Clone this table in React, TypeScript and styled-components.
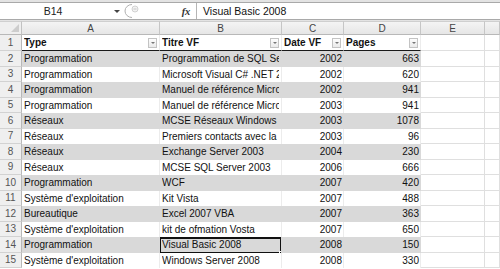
import React from "react";
import styled, { createGlobalStyle } from "styled-components";

const GlobalStyle = createGlobalStyle`
  html, body {
    margin: 0;
    padding: 0;
    background: #ffffff;
    overflow: hidden;
  }
  body {
    font-family: "Liberation Sans", Arial, sans-serif;
    color: #111;
  }
`;

const Window = styled.div`
  width: 500px;
  height: 269px;
  display: flex;
  flex-direction: column;
  overflow: hidden;
  background: #ffffff;
`;

const FormulaBar = styled.div`
  height: 21px;
  flex: none;
  box-sizing: border-box;
  padding: 2px 0 3px;
  background: #e3e3e3;
`;

const BarInner = styled.div`
  height: 16px;
  display: flex;
  align-items: stretch;
  background: #ffffff;
  border-top: 1px solid #a9a9a9;
  border-bottom: 1px solid #a9a9a9;
`;

const NameBox = styled.div`
  width: 124px;
  display: flex;
  align-items: center;
  position: relative;
  font-size: 10.5px;
  color: #222;
`;

const NameText = styled.span`
  flex: 1;
  text-align: center;
  padding-right: 8px;
`;

const Caret = styled.span`
  width: 0;
  height: 0;
  margin-right: 4px;
  border-left: 3px solid transparent;
  border-right: 3px solid transparent;
  border-top: 3px solid #444;
`;

const Splitter = styled.div`
  width: 56px;
  display: flex;
  align-items: center;
`;

const FxBox = styled.div`
  width: 12px;
  display: flex;
  align-items: center;
  justify-content: center;
  font-family: "Liberation Serif", "Times New Roman", serif;
  font-style: italic;
  font-weight: bold;
  font-size: 10.5px;
  color: #333;
`;

const FormulaInput = styled.div`
  flex: 1;
  display: flex;
  align-items: center;
  margin-left: 4px;
  padding-left: 6px;
  border-left: 1px solid #b5b5b5;
  font-size: 10.5px;
  color: #111;
`;

const Sheet = styled.div`
  display: grid;
  grid-template-columns: 22px 138px 122px 62px 77px 64px 1fr;
  grid-template-rows: 14px 16px repeat(14, 15.5px);
  flex: none;
`;

const Corner = styled.div`
  background: #efefef;
  border-right: 1px solid #c2c2c2;
  border-bottom: 1px solid #b8b8b8;
  border-top: 1px solid #cfcfcf;
  box-sizing: border-box;
  position: relative;
  &::after {
    content: "";
    position: absolute;
    right: 2px;
    bottom: 2px;
    border-left: 8px solid transparent;
    border-bottom: 8px solid #cdcdcd;
  }
`;

const ColHead = styled.div`
  background: linear-gradient(#f4f4f4, #e6e6e6);
  border-right: 1px solid #c6c6c6;
  border-bottom: 1px solid #b8b8b8;
  border-top: 1px solid #cfcfcf;
  box-sizing: border-box;
  display: flex;
  align-items: center;
  justify-content: center;
  font-size: 10px;
  color: #444;
`;

const RowHead = styled.div`
  background: #efefef;
  border-right: 1px solid #b8b8b8;
  border-bottom: 1px solid #d2d2d2;
  box-sizing: border-box;
  display: flex;
  align-items: center;
  justify-content: center;
  font-size: 10px;
  color: #555;
`;

const Cell = styled.div<{ $band?: boolean; $right?: boolean; $head?: boolean; $outside?: boolean }>`
  position: relative;
  box-sizing: border-box;
  display: flex;
  align-items: center;
  justify-content: ${(p) => (p.$right ? "flex-end" : "flex-start")};
  padding: 0 ${(p) => (p.$right ? "1px" : "2px")} 0 2px;
  overflow: hidden;
  white-space: nowrap;
  font-size: 10px;
  font-weight: ${(p) => (p.$head ? "bold" : "normal")};
  background: ${(p) => (p.$band ? "#d9d9d9" : "#ffffff")};
  border-bottom: ${(p) =>
    p.$head ? "1px solid #1a1a1a" : p.$outside ? "1px solid #dfdfdf" : "none"};
  border-right: 1px solid ${(p) => (p.$outside ? "#dfdfdf" : p.$band ? "#d9d9d9" : "#ececec")};
`;

const CellText = styled.span`
  flex: 1;
  overflow: hidden;
`;

const FilterButton = styled.span`
  flex: none;
  width: 9px;
  height: 10px;
  margin-left: 2px;
  margin-right: 0;
  box-sizing: border-box;
  border: 1px solid #c3c3c3;
  background: linear-gradient(#fdfdfd, #eaeaea);
  display: flex;
  align-items: center;
  justify-content: center;
  &::after {
    content: "";
    border-left: 2.5px solid transparent;
    border-right: 2.5px solid transparent;
    border-top: 2.5px solid #777;
  }
`;

const Selection = styled.span`
  position: absolute;
  inset: 0 -1px -1px -1px;
  border: 2px solid #111;
  pointer-events: none;
  &::after {
    content: "";
    position: absolute;
    right: -4px;
    bottom: -4px;
    width: 5px;
    height: 5px;
    background: #111;
    border: 1px solid #fff;
    box-sizing: border-box;
  }
`;

type Row = [string, string, number, number];

const rows: Row[] = [
  ["Programmation", "Programmation de SQL Server 2000", 2002, 663],
  ["Programmation", "Microsoft Visual C# .NET 2003", 2002, 620],
  ["Programmation", "Manuel de référence Microsoft Visual Basic", 2002, 941],
  ["Programmation", "Manuel de référence Microsoft Visual C#", 2003, 941],
  ["Réseaux", "MCSE Réseaux Windows Server 2003", 2003, 1078],
  ["Réseaux", "Premiers contacts avec la messagerie", 2003, 96],
  ["Réseaux", "Exchange Server 2003", 2004, 230],
  ["Réseaux", "MCSE SQL Server 2003", 2006, 666],
  ["Programmation", "WCF", 2007, 420],
  ["Système d'exploitation", "Kit Vista", 2007, 488],
  ["Bureautique", "Excel 2007 VBA", 2007, 363],
  ["Système d'exploitation", "kit de ofmation Vosta", 2007, 650],
  ["Programmation", "Visual Basic 2008", 2008, 150],
  ["Système d'exploitation", "Windows Server 2008", 2008, 330],
];

const headers = ["Type", "Titre VF", "Date VF", "Pages"];
const letters = ["A", "B", "C", "D", "E", ""];

const SplitterIcon = () => (
  <svg width="20" height="14" viewBox="0 0 20 14">
    <path d="M8 0.5 A7 6.5 0 0 0 8 13.5" fill="none" stroke="#b0b0b0" strokeWidth="1" />
    <circle cx="11" cy="5" r="3" fill="#f2f2f2" stroke="#c8c8c8" strokeWidth="0.8" />
    <line x1="9.5" y1="5" x2="12.5" y2="5" stroke="#bdbdbd" strokeWidth="0.8" />
  </svg>
);

const App = () => {
  return (
    <>
      <GlobalStyle />
      <Window>
        <FormulaBar>
          <BarInner>
            <NameBox>
              <NameText>B14</NameText>
              <Caret />
            </NameBox>
            <Splitter>
              <SplitterIcon />
            </Splitter>
            <FxBox>fx</FxBox>
            <FormulaInput>Visual Basic 2008</FormulaInput>
          </BarInner>
        </FormulaBar>
        <Sheet>
          <Corner />
          {letters.map((l, i) => (
            <ColHead key={"c" + i}>{l}</ColHead>
          ))}

          <RowHead>1</RowHead>
          {headers.map((h) => (
            <Cell key={h} $head>
              <CellText>{h}</CellText>
              <FilterButton />
            </Cell>
          ))}
          <Cell $outside />
          <Cell $outside />

          {rows.map((r, i) => {
            const n = i + 2;
            const band = n % 2 === 0;
            return (
              <React.Fragment key={n}>
                <RowHead>{n}</RowHead>
                <Cell $band={band}>
                  <CellText>{r[0]}</CellText>
                </Cell>
                <Cell $band={band}>
                  <CellText>{r[1]}</CellText>
                  {n === 14 && <Selection />}
                </Cell>
                <Cell $band={band} $right>
                  {r[2]}
                </Cell>
                <Cell $band={band} $right>
                  {r[3]}
                </Cell>
                <Cell $outside />
                <Cell $outside />
              </React.Fragment>
            );
          })}
        </Sheet>
      </Window>
    </>
  );
};

export default App;
